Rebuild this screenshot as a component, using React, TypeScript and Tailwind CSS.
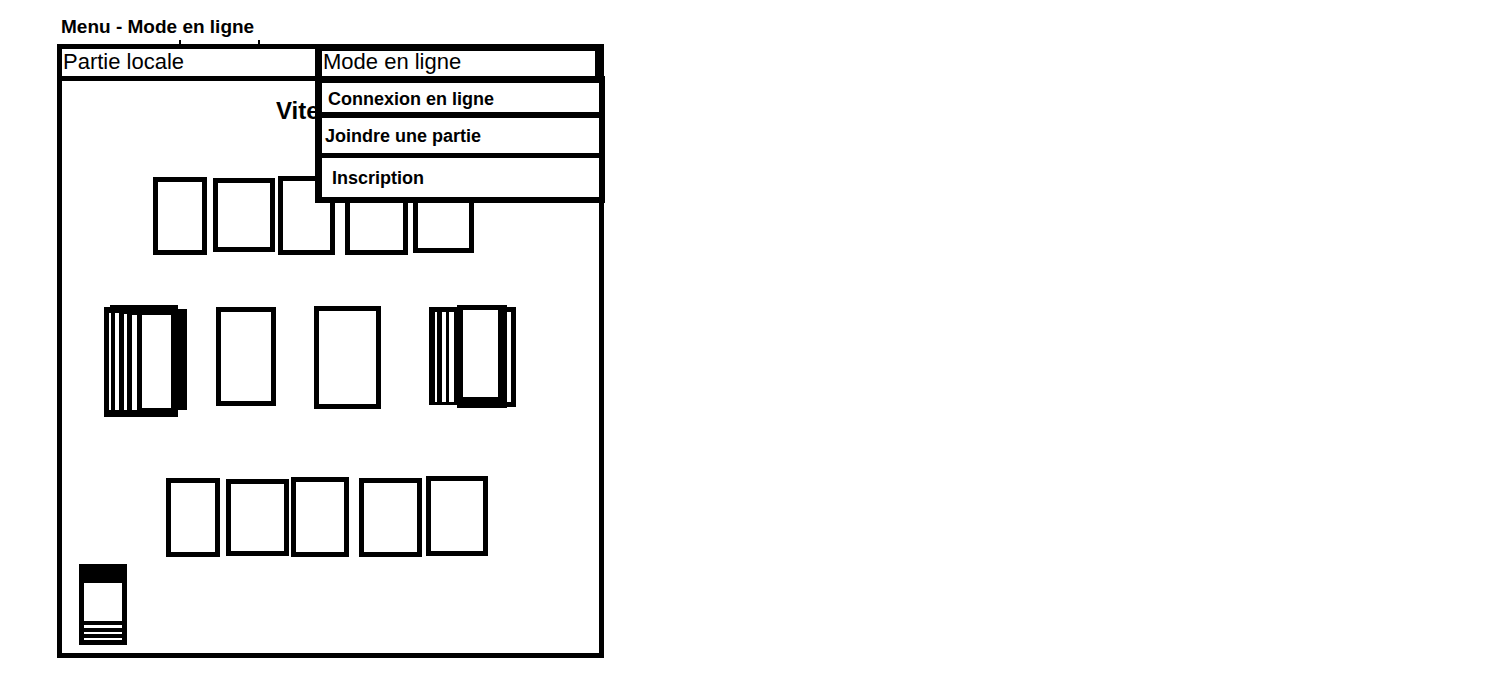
import React from 'react';

type Box = { ml: number; mt: number; w: number; h: number };

const row1: Box[] = [
  { ml: 91, mt: 1, w: 54, h: 78 },
  { ml: 6, mt: 2, w: 62, h: 74 },
  { ml: 3, mt: 0, w: 57, h: 79 },
  { ml: 10, mt: 3, w: 63, h: 76 },
  { ml: 5, mt: 4, w: 61, h: 73 },
];

const row3: Box[] = [
  { ml: 104, mt: 2, w: 54, h: 79 },
  { ml: 6, mt: 3, w: 63, h: 77 },
  { ml: 2, mt: 1, w: 58, h: 80 },
  { ml: 10, mt: 2, w: 63, h: 79 },
  { ml: 4, mt: 0, w: 62, h: 80 },
];

function Card({ b }: { b: Box }) {
  return (
    <div
      className="shrink-0 border-[5px] border-black bg-white"
      style={{ marginLeft: b.ml, marginTop: b.mt, width: b.w, height: b.h }}
    />
  );
}

// pile de cartes (gauche)
function LeftStack() {
  return (
    <svg width="84" height="113" viewBox="0 0 84 113" className="shrink-0">
      <rect x="1" y="2" width="74" height="110" fill="#000" />
      <rect x="7" y="0" width="68" height="8" fill="#000" />
      <rect x="68" y="4" width="16" height="101" fill="#000" />
      <rect x="6" y="8" width="2" height="97" fill="#fff" />
      <rect x="12" y="8" width="4" height="97" fill="#fff" />
      <rect x="21" y="9" width="3" height="96" fill="#fff" />
      <rect x="29" y="10" width="5" height="95" fill="#fff" />
      <rect x="39" y="10" width="29" height="93" fill="#fff" />
    </svg>
  );
}

// pile de cartes (droite)
function RightStack() {
  return (
    <svg width="87" height="103" viewBox="0 0 87 103" className="shrink-0">
      <rect x="0" y="2" width="78" height="98" fill="#000" />
      <rect x="76" y="2" width="11" height="100" fill="#000" />
      <rect x="78" y="7" width="4" height="90" fill="#fff" />
      <rect x="6" y="7" width="2" height="90" fill="#fff" />
      <rect x="13" y="7" width="4" height="90" fill="#fff" />
      <rect x="20" y="7" width="5" height="90" fill="#fff" />
      <rect x="28" y="0" width="50" height="103" fill="#000" />
      <rect x="34" y="5" width="35" height="87" fill="#fff" />
    </svg>
  );
}

function Deck() {
  return (
    <svg width="48" height="81" viewBox="0 0 48 81" className="shrink-0">
      <rect x="0" y="0" width="48" height="81" fill="#000" />
      <rect x="5" y="19" width="38" height="38" fill="#fff" />
      <rect x="5" y="61" width="38" height="3" fill="#fff" />
      <rect x="5" y="68" width="38" height="2" fill="#fff" />
      <rect x="5" y="74" width="38" height="2" fill="#fff" />
    </svg>
  );
}

export default function App() {
  return (
    <div className="w-[1506px] h-[675px] bg-white text-black font-['Liberation_Sans',Arial,sans-serif] overflow-hidden">
      <div className="pt-[16px] pl-[61px] text-[19px] leading-[21px] font-bold">Menu - Mode en ligne</div>

      <div className="flex h-[7px] items-end">
        <div className="ml-[179px] w-[2px] h-[4px] bg-black" />
        <div className="ml-[77px] w-[2px] h-[4px] bg-black" />
      </div>

      <div className="relative ml-[57px] w-[547px] h-[614px] border-[5px] border-black">
        {/* onglets */}
        <div className="flex h-[32px] border-b-[5px] border-black">
          <div className="w-[253px] pl-[1px] text-[22px] leading-[25px]">Partie locale</div>
          <div className="flex-1 border-l-[7px] border-r-[4px] border-t-[2px] border-black pl-[1px] text-[22px] leading-[22px]">
            Mode en ligne
          </div>
        </div>

        <div className="flex flex-col">
          <div className="mt-[16px] w-[253px] overflow-hidden whitespace-nowrap pl-[214px] text-[24px] leading-[28px] font-bold">
            Vitesse
          </div>

          <div className="mt-[51px] flex h-[79px] items-start">
            {row1.map((b, i) => (
              <Card key={i} b={b} />
            ))}
          </div>

          <div className="mt-[50px] flex h-[113px] items-start">
            <div className="ml-[41px]">
              <LeftStack />
            </div>
            <Card b={{ ml: 29, mt: 2, w: 60, h: 99 }} />
            <Card b={{ ml: 38, mt: 1, w: 67, h: 103 }} />
            <div className="ml-[48px]">
              <RightStack />
            </div>
          </div>

          <div className="mt-[58px] flex h-[81px] items-start">
            {row3.map((b, i) => (
              <Card key={i} b={b} />
            ))}
          </div>

          <div className="mt-[7px] ml-[17px]">
            <Deck />
          </div>
        </div>

        {/* menu déroulant */}
        <div className="absolute left-[253px] top-[27px] w-[290px] h-[127px] bg-white border-black border-l-[7px] border-r-[6px] border-t-[7px] border-b-[6px] flex flex-col text-[18px] font-bold">
          <div className="h-[29px] flex items-center pl-[6px] pt-[3px]">Connexion en ligne</div>
          <div className="h-[41px] border-t-[6px] border-black flex items-center pl-[3px] pt-[1px]">Joindre une partie</div>
          <div className="flex-1 border-t-[5px] border-black flex items-center pl-[10px] pt-[1px]">Inscription</div>
        </div>
      </div>
    </div>
  );
}
